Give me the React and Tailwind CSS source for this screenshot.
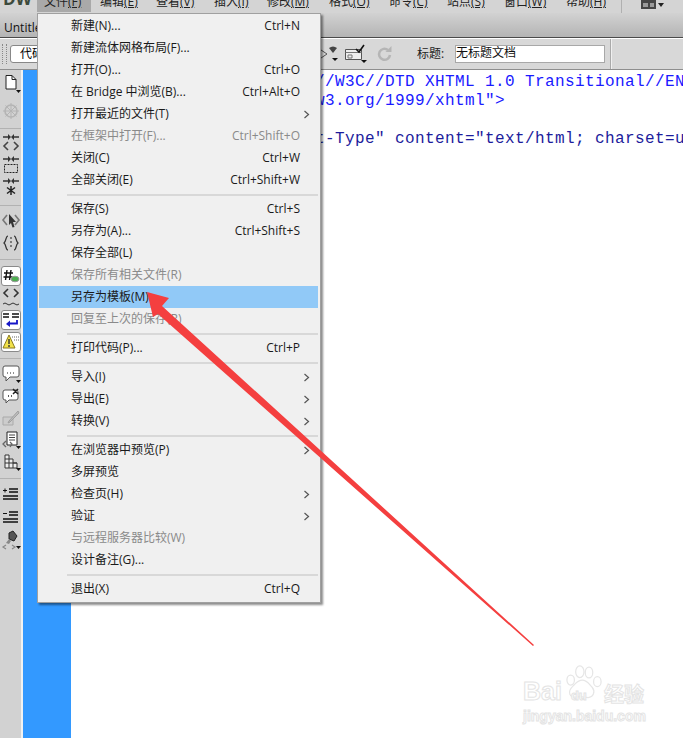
import React from "react";

const uiFont = { fontFamily: '"Open Sans","Noto Sans CJK SC",sans-serif' };

const menuGroups = [
  [
    { label: "新建(N)...", key: "Ctrl+N" },
    { label: "新建流体网格布局(F)..." },
    { label: "打开(O)...", key: "Ctrl+O" },
    { label: "在 Bridge 中浏览(B)...", key: "Ctrl+Alt+O" },
    { label: "打开最近的文件(T)", sub: true },
    { label: "在框架中打开(F)...", key: "Ctrl+Shift+O", off: true },
    { label: "关闭(C)", key: "Ctrl+W" },
    { label: "全部关闭(E)", key: "Ctrl+Shift+W" },
  ],
  [
    { label: "保存(S)", key: "Ctrl+S" },
    { label: "另存为(A)...", key: "Ctrl+Shift+S" },
    { label: "保存全部(L)" },
    { label: "保存所有相关文件(R)", off: true },
    { label: "另存为模板(M)...", active: true },
    { label: "回复至上次的保存(R)", off: true },
  ],
  [{ label: "打印代码(P)...", key: "Ctrl+P" }],
  [
    { label: "导入(I)", sub: true },
    { label: "导出(E)", sub: true },
    { label: "转换(V)", sub: true },
  ],
  [
    { label: "在浏览器中预览(P)", sub: true },
    { label: "多屏预览" },
    { label: "检查页(H)", sub: true },
    { label: "验证", sub: true },
    { label: "与远程服务器比较(W)", off: true },
    { label: "设计备注(G)..." },
  ],
  [{ label: "退出(X)", key: "Ctrl+Q" }],
];

const topMenus = [
  { label: "编辑", key: "(E)", cls: "w-[56px]" },
  { label: "查看", key: "(V)", cls: "w-[58px]" },
  { label: "插入", key: "(I)", cls: "w-[53px]" },
  { label: "修改", key: "(M)", cls: "w-[62px]" },
  { label: "格式", key: "(O)", cls: "w-[60px]" },
  { label: "命令", key: "(C)", cls: "w-[58px]" },
  { label: "站点", key: "(S)", cls: "w-[57px]" },
  { label: "窗口", key: "(W)", cls: "w-[62px]" },
  { label: "帮助", key: "(H)", cls: "w-[55px]" },
];

const Caret = () => <path d="M15 16h5l-2.500 3z" fill="#111" />;

const Ico = ({ children }) => (
  <svg width="20" height="20" viewBox="0 0 20 20" fill="none">{children}</svg>
);

const Arrows = () => (
  <path d="M2 3.200h5V1l3 3-3 3V4.800H2zM18 3.200h-5V1l-3 3 3 3V4.800h5z" fill="#333" />
);

const Code = ({ y = 10, c = "#444" }) => (
  <path d={`M7 ${y}l-4 4 4 4M13 ${y}l4 4-4 4`} stroke={c} strokeWidth="1.600" />
);

const Boxed = ({ children }) => (
  <div className="w-[20px] h-[20px] bg-white border border-[#8a8a8a] rounded-[3px] flex items-center justify-center">
    {children}
  </div>
);

const sideGroups = [
  [
    <Ico><path d="M5 1.500h6l4 4v9.500H5z" fill="#fff" stroke="#222" /><path d="M11 1.500v4h4" stroke="#222" /><Caret /></Ico>,
    <Ico><circle cx="10" cy="10" r="6" stroke="#b4b4b4" strokeWidth="1.600" /><path d="M10 2v16M2 10h16M4.500 4.500l11 11M15.500 4.500l-11 11" stroke="#b4b4b4" /></Ico>,
  ],
  [
    <Ico><Arrows /><Code y={9} /></Ico>,
    <Ico><Arrows /><rect x="3.500" y="9.500" width="13" height="8" stroke="#222" strokeDasharray="2 1" /></Ico>,
    <Ico><Arrows /><path d="M10 9v9M6 10.500l8 6M14 10.500l-8 6" stroke="#222" strokeWidth="1.500" /></Ico>,
  ],
  [
    <Ico><path d="M6 5l-4 5 4 5M14 5l4 5-4 5" stroke="#777" strokeWidth="1.600" /><path d="M8 4l7 8h-3l1.500 5-2 .5L10 13l-2 2z" fill="#333" /></Ico>,
    <Ico><path d="M7 3C4.500 3 5.500 8 3 10c2.500 2 1.500 7 4 7M13 3c2.500 0 1.500 5 4 7-2.500 2-1.500 7-4 7" stroke="#333" strokeWidth="1.200" /><path d="M10 4v12" stroke="#555" strokeDasharray="2 2" strokeWidth="1.400" /></Ico>,
  ],
  [
    <Boxed><svg width="18" height="18" viewBox="0 0 18 18" fill="none"><path d="M5 3l-1.500 10M9 3l-1.500 10M2 6h9M1.500 10h9" stroke="#111" strokeWidth="1.400" /><ellipse cx="13" cy="12" rx="4" ry="2.800" fill="#4caf50" stroke="#999" /></svg></Boxed>,
    <Ico><Code y={1} c="#333" /><path d="M2 16q2-2 4 0t4 0 4 0 4 0" stroke="#333" /></Ico>,
    <Boxed><svg width="18" height="18" viewBox="0 0 18 18" fill="none"><path d="M1 3h6M10 3h7M1 6h6M10 6h7" stroke="#111" strokeWidth="1.500" /><path d="M15 9v3.500H7" stroke="#1616c8" strokeWidth="1.800" /><path d="M8 9.500L4 13l4 3z" fill="#1616c8" /></svg></Boxed>,
    <Boxed><svg width="18" height="18" viewBox="0 0 18 18" fill="none"><path d="M7 2L1 15h12z" fill="#f2e24a" stroke="#8a7a20" /><path d="M7 6v5M7 12v2" stroke="#333" strokeWidth="1.400" /><path d="M10 4h7M12 7h5" stroke="#999" strokeDasharray="1 1" strokeWidth="1.400" /></svg></Boxed>,
  ],
  [
    <Ico><path d="M4 2h12a2 2 0 012 2v7a2 2 0 01-2 2H9l-4 4v-4H4a2 2 0 01-2-2V4a2 2 0 012-2z" fill="#fff" stroke="#555" /><path d="M6 9h1M9 9h1M12 9h1" stroke="#222" /><Caret /></Ico>,
    <Ico><path d="M4 4h11a2 2 0 012 2v6a2 2 0 01-2 2H8l-3 3v-3H4a2 2 0 01-2-2V6a2 2 0 012-2z" fill="#fff" stroke="#555" /><path d="M7 10h1M10 10h1M12 3l5 5M17 3l-5 5" stroke="#222" strokeWidth="1.500" /></Ico>,
    <Ico><path d="M2 9h10v8H2z" fill="#ccc" stroke="#aaa" /><path d="M8 13l-1 2 2-1L18 5l-1-2z" fill="#bbb" stroke="#a0a0a0" /></Ico>,
    <Ico><path d="M6 2h10v13H6z" fill="#fff" stroke="#222" /><path d="M8 5h6M8 7.500h6M8 10h6" stroke="#444" /><path d="M5 11l-3 3 3 3M9 12l2 2-2 3" stroke="#666" strokeWidth="1.300" /><Caret /></Ico>,
    <Ico><path d="M4 3h4v4h4v4h4v5H4z" fill="#eee" stroke="#333" /><path d="M4 7h4v9M4 11h12M12 11v5" stroke="#333" /><Caret /></Ico>,
  ],
  [
    <Ico><path d="M8 5h9M8 8h9" stroke="#111" strokeWidth="1.600" /><path d="M2 6.500h4M4 4.500v4" stroke="#111" /><path d="M2 12h15M2 15h15" stroke="#111" strokeWidth="1.300" /></Ico>,
    <Ico><path d="M8 5h9M8 8h9" stroke="#111" strokeWidth="1.600" /><path d="M2 6.500h4" stroke="#111" /><path d="M2 12h15M2 15h15" stroke="#111" strokeWidth="1.300" /></Ico>,
    <Ico><path d="M8 3l4-2 4 5-3 5-5-2z" fill="#555" stroke="#222" /><path d="M8 9l-3 4 3 1 2-3z" fill="#888" /><path d="M5 15l-3 2 3 2M11 15l3 2-3 2" stroke="#888" strokeWidth="1.200" /><Caret /></Ico>,
  ],
];

const groupCls = ["pt-[3px] pb-[6px] gap-[5px]", "py-[3px] pb-[7px]", "py-[3px] pb-[5px] gap-px", "pt-[5px] pb-[5px]", "pt-[4px] pb-[5px]", "pt-[4px] gap-px"];

function MenuRow({ item }) {
  return (
    <div className={`h-[22px] pl-[32px] pr-[18px] flex items-center justify-between text-[12px] whitespace-nowrap ${item.active ? "bg-[#91c9f7]" : ""} ${item.off ? "text-[#8a8a8a]" : "text-[#1a1a1a]"}`}>
      <span>{item.label}</span>
      {item.key && <span>{item.key}</span>}
      {item.sub && (
        <svg className="mr-[-10px]" width="7" height="9" viewBox="0 0 7 9" fill="none"><path d="M1.500 1l4 3.500-4 3.500" stroke="#555" strokeWidth="1.200" /></svg>
      )}
    </div>
  );
}

function FileMenu() {
  return (
    <div className="absolute left-[37px] top-[13px] w-[284px] bg-[#f0f0f0] border border-[#a0a0a0] pl-px pr-[2px] pt-px pb-[2px] shadow-[2px_2px_2px_rgba(0,0,0,0.45)]" style={uiFont}>
      {menuGroups.map((group, i) => (
        <div key={i}>
          {i > 0 && (
            <div className="h-[7px] flex items-center pl-[28px]">
              <div className="h-[2px] w-full bg-[#d8d8d8]" />
            </div>
          )}
          {group.map((item) => <MenuRow key={item.label} item={item} />)}
        </div>
      ))}
    </div>
  );
}

function Watermark() {
  return (
    <div className="absolute left-[523px] top-[680px] w-[125px] text-white [-webkit-text-stroke:1px_#e4e4e4] leading-none" style={{ fontFamily: '"Liberation Sans","Noto Sans CJK SC",sans-serif' }}>
      <svg className="absolute left-[41px] top-[-16px]" width="40" height="42" viewBox="0 0 48 48" fill="none" stroke="#e6e6e6" strokeWidth="1.500">
        <ellipse cx="8" cy="18" rx="4.500" ry="6" />
        <ellipse cx="19" cy="8" rx="5" ry="7" />
        <ellipse cx="30" cy="9" rx="4.500" ry="6.500" />
        <ellipse cx="40" cy="20" rx="4.500" ry="6" />
        <path d="M22 18c6 0 8 5 12 9 4 5 1 12-5 12-4 0-6-1-9-1-4 0-10 3-13-3-2-5 2-8 5-11 3-3 5-6 10-6z" />
      </svg>
      <div className="relative flex items-end h-[24px]">
        <span className="text-[25px] font-bold">Bai</span>
        <span className="text-[13px] font-bold ml-[9px] mb-[2px] w-[24px]">du</span>
        <span className="text-[20px] font-bold ml-[9px]" style={{ fontFamily: '"Noto Sans CJK SC",sans-serif' }}>经验</span>
      </div>
      <div className="relative text-[14px] font-bold mt-[5px] whitespace-nowrap">jingyan.baidu.com</div>
    </div>
  );
}

export default function App() {
  return (
    <div className="relative w-[683px] h-[738px] overflow-hidden bg-white" style={uiFont}>
      {/* menu bar, cut off at the top */}
      <div className="h-[13px] bg-[#d4d4d4] flex items-start overflow-hidden text-[12px] text-[#222] leading-[18px] whitespace-nowrap">
        <div className="w-[37px] text-[17px] font-bold text-[#3c4a3c] leading-[21px] pl-[3px] mt-[-12px]">DW</div>
        <div className="w-[54px] h-[12px] bg-[#a9a9a9] pl-[7px] shrink-0"><div className="mt-[-7px]">文件<span className="underline">(F)</span></div></div>
        <div className="w-[9px] shrink-0" />
        {topMenus.map((m) => (
          <div key={m.label} className={`${m.cls} shrink-0 mt-[-7px]`}>{m.label}<span className="underline">{m.key}</span></div>
        ))}
        <div className="h-[13px] w-px bg-[#b0b0b0] shrink-0 mr-[18px]" />
        <svg className="shrink-0" width="24" height="13" viewBox="0 0 24 13"><path d="M1 0h15v9H1z" fill="#444" /><path d="M3 3h5v4H3zM10 3h4v4h-4z" fill="#999" /><path d="M18 3h6l-3 4z" fill="#222" /></svg>
      </div>

      {/* document tab strip */}
      <div className="h-[24px] bg-gradient-to-b from-[#d2d2d2] to-[#b4b4b4] pl-[4px] text-[12px] text-[#111] leading-[30px]">Untitle</div>
      <div className="h-[2px] bg-[#4a4a4a] border-b border-white" />

      {/* document toolbar */}
      <div className="h-[31px] bg-[#d8d8d8] border-b border-[#8e8e8e] flex items-center">
        <div className="ml-[2px] w-[5px] h-[20px] border-x border-dotted border-[#888]" />
        <div className="ml-[3px] w-[50px] h-[18px] bg-white border border-[#888] rounded-[3px] pl-[9px] text-[12px] leading-[16px]">代码</div>
        <svg className="ml-[260px]" width="22" height="20" viewBox="0 0 22 20" fill="none"><path d="M1 6l6 4-6 4" stroke="#555" /><path d="M9 4q4-3 8 0l-4 5z" fill="#444" /><path d="M12 14h6l-3 3z" fill="#111" /></svg>
        <svg className="ml-[2px]" width="24" height="20" viewBox="0 0 24 20" fill="none"><path d="M1.500 5.500h16v10h-16z" fill="#eee" stroke="#555" /><path d="M1.500 8.500h16M4 11h4v3H4z" stroke="#777" /><path d="M12 5l3 3 5-7" stroke="#111" strokeWidth="1.600" /><path d="M17 16h6l-3 3z" fill="#111" /></svg>
        <svg className="ml-[8px]" width="18" height="18" viewBox="0 0 18 18" fill="none"><path d="M14 10a5.500 5.500 0 11-2-5" stroke="#b5b5b5" strokeWidth="2.500" /><path d="M15.500 1v6h-6z" fill="#b5b5b5" /></svg>
        <span className="ml-[23px] text-[12px] w-[38px] text-[#222]">标题:</span>
        <div className="w-[150px] h-[18px] bg-white border border-[#a8a8a8] text-[12px] leading-[14px] text-[#111]">无标题文档</div>
        <div className="ml-[5px] w-[2px] h-full bg-[#f0f0f0] border-l border-[#aaa]" />
      </div>

      <div className="flex h-[668px]">
        {/* coding toolbar */}
        <div className="w-[23px] bg-[#d2d2d2] border-r-2 border-r-[#f2f2f2] shrink-0 flex flex-col">
          {sideGroups.map((group, i) => (
            <div key={i} className={`flex flex-col border-[#b2b2b2] ${i < sideGroups.length - 1 ? "border-b" : ""} ${groupCls[i]}`}>
              {group.map((icon, j) => (
                <div key={j} className="h-[22px] flex items-center justify-center">{icon}</div>
              ))}
            </div>
          ))}
        </div>
        <div className="w-[48px] bg-[#3399ff] shrink-0" />
        {/* source code */}
        <div className="flex-1 min-w-0 pl-[4px] pt-[3px] text-[16px] tracking-[0.4px] leading-[19px] whitespace-nowrap overflow-hidden" style={{ fontFamily: '"Liberation Mono",monospace' }}>
          <div className="text-[#1a1aff]">{'<!DOCTYPE html PUBLIC "-//W3C//DTD XHTML 1.0 Transitional//EN"'}</div>
          <div className="text-[#1a1aff]">{'<html xmlns="http://www.w3.org/1999/xhtml">'}</div>
          <div className="text-[#1a1aff]">{'<head>'}</div>
          <div className="text-[#1c1c9c]">{'<meta http-equiv="Content-Type" content="text/html; charset=utf-8" />'}</div>
        </div>
      </div>

      <FileMenu />

      {/* annotation arrow */}
      <svg className="absolute left-0 top-0 pointer-events-none" width="683" height="738" viewBox="0 0 683 738">
        <path d="M147 292L169 298L162 306L534 645L533 646L158 314L153 317Z" fill="#f43f3f" />
      </svg>

      <Watermark />
    </div>
  );
}
